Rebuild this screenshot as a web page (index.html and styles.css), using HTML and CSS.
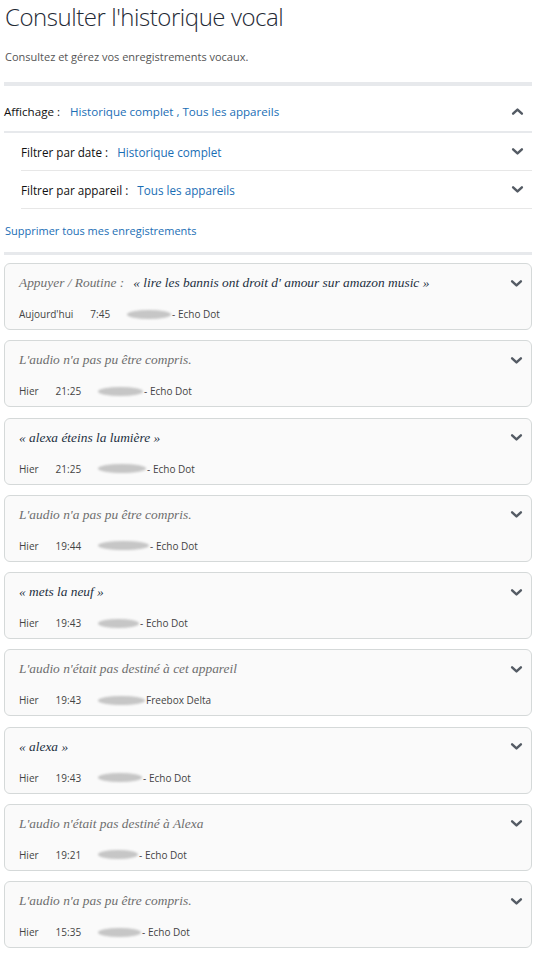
FILE: index.html
```html
<!DOCTYPE html>
<html lang="fr">
<head>
<meta charset="utf-8">
<link rel="stylesheet" href="styles.css">
</head>
<body>
<div class="page">
  <h1 class="title">Consulter l'historique vocal</h1>
  <p class="subtitle">Consultez et gérez vos enregistrements vocaux.</p>
  <div class="bar"></div>
  <div class="display-row">
    <span class="label">Affichage :</span>
    <span class="value">Historique complet , Tous les appareils</span>
    <svg class="chev up" viewBox="0 0 10 6"><polyline points="1,5 5,1.2 9,5"/></svg>
  </div>
  <div class="bar thin"></div>
  <div class="filters">
    <div class="filter-row">
      <span class="label">Filtrer par date :</span>
      <span class="value">Historique complet</span>
      <svg class="chev" viewBox="0 0 10 6"><polyline points="1,1 5,4.8 9,1"/></svg>
    </div>
    <div class="filter-row">
      <span class="label">Filtrer par appareil :</span>
      <span class="value">Tous les appareils</span>
      <svg class="chev" viewBox="0 0 10 6"><polyline points="1,1 5,4.8 9,1"/></svg>
    </div>
  </div>
  <a class="delete-link">Supprimer tous mes enregistrements</a>
  <div class="bar"></div>

  <div class="cards">
    <div class="card">
      <div class="card-head"><span class="utter"><span class="muted">Appuyer / Routine :</span><span class="quote">« lire les bannis ont droit d' amour sur amazon music »</span></span><svg class="chev" viewBox="0 0 10 6"><polyline points="1,1 5,4.8 9,1"/></svg></div>
      <div class="meta"><span class="day">Aujourd'hui</span><span class="time">7:45</span><span class="blob" style="width:44px"></span><span class="device">- Echo Dot</span></div>
    </div>
    <div class="card">
      <div class="card-head"><span class="utter muted">L'audio n'a pas pu être compris.</span><svg class="chev" viewBox="0 0 10 6"><polyline points="1,1 5,4.8 9,1"/></svg></div>
      <div class="meta"><span class="day">Hier</span><span class="time">21:25</span><span class="blob" style="width:45px"></span><span class="device">- Echo Dot</span></div>
    </div>
    <div class="card">
      <div class="card-head"><span class="utter quote">« alexa éteins la lumière »</span><svg class="chev" viewBox="0 0 10 6"><polyline points="1,1 5,4.8 9,1"/></svg></div>
      <div class="meta"><span class="day">Hier</span><span class="time">21:25</span><span class="blob" style="width:48px"></span><span class="device">- Echo Dot</span></div>
    </div>
    <div class="card">
      <div class="card-head"><span class="utter muted">L'audio n'a pas pu être compris.</span><svg class="chev" viewBox="0 0 10 6"><polyline points="1,1 5,4.8 9,1"/></svg></div>
      <div class="meta"><span class="day">Hier</span><span class="time">19:44</span><span class="blob" style="width:51px"></span><span class="device">- Echo Dot</span></div>
    </div>
    <div class="card">
      <div class="card-head"><span class="utter quote">« mets la neuf »</span><svg class="chev" viewBox="0 0 10 6"><polyline points="1,1 5,4.8 9,1"/></svg></div>
      <div class="meta"><span class="day">Hier</span><span class="time">19:43</span><span class="blob" style="width:41px"></span><span class="device">- Echo Dot</span></div>
    </div>
    <div class="card">
      <div class="card-head"><span class="utter muted">L'audio n'était pas destiné à cet appareil</span><svg class="chev" viewBox="0 0 10 6"><polyline points="1,1 5,4.8 9,1"/></svg></div>
      <div class="meta"><span class="day">Hier</span><span class="time">19:43</span><span class="blob" style="width:47px"></span><span class="device">Freebox Delta</span></div>
    </div>
    <div class="card">
      <div class="card-head"><span class="utter quote">« alexa »</span><svg class="chev" viewBox="0 0 10 6"><polyline points="1,1 5,4.8 9,1"/></svg></div>
      <div class="meta"><span class="day">Hier</span><span class="time">19:43</span><span class="blob" style="width:44px"></span><span class="device">- Echo Dot</span></div>
    </div>
    <div class="card">
      <div class="card-head"><span class="utter muted">L'audio n'était pas destiné à Alexa</span><svg class="chev" viewBox="0 0 10 6"><polyline points="1,1 5,4.8 9,1"/></svg></div>
      <div class="meta"><span class="day">Hier</span><span class="time">19:21</span><span class="blob" style="width:40px"></span><span class="device">- Echo Dot</span></div>
    </div>
    <div class="card">
      <div class="card-head"><span class="utter muted">L'audio n'a pas pu être compris.</span><svg class="chev" viewBox="0 0 10 6"><polyline points="1,1 5,4.8 9,1"/></svg></div>
      <div class="meta"><span class="day">Hier</span><span class="time">15:35</span><span class="blob" style="width:43px"></span><span class="device">- Echo Dot</span></div>
    </div>
  </div>
</div>
</body>
</html>
```
FILE: styles.css
```css
* { box-sizing: border-box; }
body {
  margin: 0;
  background: #ffffff;
  font-family: "Open Sans", "Noto Sans", sans-serif;
  color: #111111;
}
.page {
  padding: 0 4px;
}
.title {
  margin: 0;
  padding-left: 1px;
  font-family: "Open Sans", sans-serif;
  font-weight: 300;
  font-size: 24px;
  line-height: 33px;
  color: #1f2a36;
  letter-spacing: -0.45px;
}
.subtitle {
  margin: 16px 0 0 1px;
  font-size: 11px;
  line-height: 16px;
  color: #555555;
}
.bar {
  height: 4px;
  background: #e7e9ec;
  margin-top: 17px;
}
.bar.thin {
  height: 2px;
  margin-top: 0;
}
.display-row {
  display: flex;
  align-items: center;
  height: 45px;
  padding-top: 6px;
  font-size: 11.6px;
}
.label {
  color: #111111;
}
.value {
  color: #1a6eb5;
  margin-left: 9px;
}
.display-row .value {
  margin-left: 10px;
}
.chev {
  width: 11px;
  height: 7px;
  margin-left: auto;
  margin-right: 9px;
  flex: none;
  overflow: visible;
}
.chev polyline {
  fill: none;
  stroke: #545b64;
  stroke-width: 2.2;
  stroke-linecap: round;
  stroke-linejoin: round;
}
.filters {
  padding-left: 17px;
}
.filter-row {
  display: flex;
  align-items: center;
  height: 38px;
  border-bottom: 1px solid #e7e7e7;
  font-size: 11.7px;
}
.delete-link {
  display: block;
  margin: 14px 0 0 1px;
  font-size: 11px;
  line-height: 16px;
  color: #1a6eb5;
  cursor: pointer;
}
.delete-link + .bar {
  height: 3px;
  margin-top: 13px;
}
.cards {
  display: flex;
  flex-direction: column;
  gap: 10.25px;
  padding-top: 8px;
}
.card {
  height: 67px;
  border: 1px solid #d5d9d9;
  border-radius: 6px;
  background: #fafafa;
  padding: 10px 0 0 14px;
}
.card-head {
  display: flex;
  align-items: center;
  height: 18px;
}
.utter {
  font-family: "Liberation Serif", serif;
  font-style: italic;
  font-size: 13.4px;
}
.muted {
  color: #6e6e6e;
}
.quote {
  color: #232f3e;
}
.muted + .quote {
  margin-left: 9px;
}
.meta {
  display: flex;
  align-items: center;
  gap: 17px;
  margin-top: 14px;
  height: 16px;
  font-size: 10px;
  color: #444444;
}
.blob {
  display: inline-block;
  height: 9px;
  border-radius: 50%;
  background: #c6c6c6;
  filter: blur(1.2px);
  margin-right: -16px;
}
```
